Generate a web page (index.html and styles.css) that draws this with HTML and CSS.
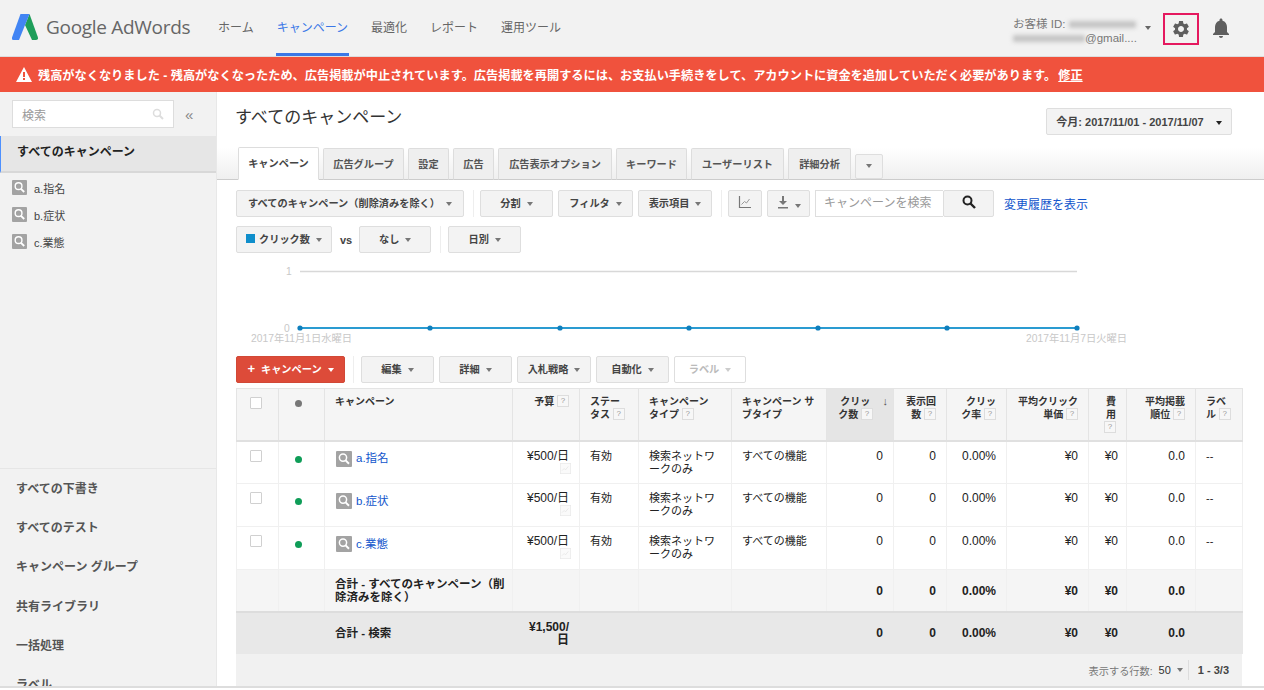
FILE: index.html
```html
<!DOCTYPE html>
<html lang="ja">
<head>
    <meta charset="UTF-8">
    <title>Google AdWords</title>
    <link rel="stylesheet" href="styles.css">
</head>
<body>
    <svg class="sprites" width="0" height="0">
        <symbol id="mag" viewBox="0 0 16 16"><rect width="16" height="16" rx="1" fill="#a3a3a3"/><circle cx="7" cy="6.600" r="3.600" fill="none" stroke="#fff" stroke-width="1.500"/><path d="M9.600 9.400l3.400 3.400" stroke="#fff" stroke-width="2"/></symbol>
        <symbol id="spark" viewBox="0 0 16 16"><rect x=".5" y=".5" width="15" height="15" fill="#fafafa" stroke="#e8e8e8"/><path d="M3 11l3-3 2 2 4-5" fill="none" stroke="#e2e2e2"/></symbol>
    </svg>

    <header class="topbar">
        <div class="logo">
            <svg width="26" height="26" viewBox="0 0 26 26"><path d="M13 11L17.500 0 25.800 23q.8 3-1.800 3H20z" fill="#1e9e5a"/><path d="M8.500 0h9L7 26H1.500Q-.8 26 .2 23z" fill="#4285f4"/></svg>
            <span class="logo-text">Google AdWords</span>
        </div>
        <nav class="menu">
            <a href="#">ホーム</a>
            <a href="#" class="active">キャンペーン</a>
            <a href="#">最適化</a>
            <a href="#">レポート</a>
            <a href="#">運用ツール</a>
        </nav>
        <div class="account">
            <div>お客様 ID: <span class="blur blur-id"></span></div>
            <div><span class="blur blur-mail"></span>@gmail....</div>
        </div>
        <span class="caret caret-account"></span>
        <div class="gear-box">
            <svg width="20" height="20" viewBox="0 0 24 24"><path fill="#5f5f5f" d="M19.14 12.94c.04-.3.06-.61.06-.94 0-.32-.02-.64-.07-.94l2.03-1.58c.18-.14.23-.41.12-.61l-1.92-3.32c-.12-.22-.37-.29-.59-.22l-2.39.96c-.5-.38-1.03-.7-1.62-.94l-.36-2.54c-.04-.24-.24-.41-.48-.41h-3.84c-.24 0-.43.17-.47.41l-.36 2.54c-.59.24-1.13.57-1.62.94l-2.39-.96c-.22-.08-.47 0-.59.22L2.74 8.87c-.12.21-.08.47.12.61l2.03 1.58c-.05.3-.09.63-.09.94s.02.64.07.94l-2.03 1.58c-.18.14-.23.41-.12.61l1.92 3.32c.12.22.37.29.59.22l2.39-.96c.5.38 1.03.7 1.62.94l.36 2.54c.05.24.24.41.48.41h3.84c.24 0 .44-.17.47-.41l.36-2.54c.59-.24 1.13-.56 1.62-.94l2.39.96c.22.08.47 0 .59-.22l1.92-3.32c.12-.22.07-.47-.12-.61l-2.01-1.58zM12 15.6c-1.98 0-3.6-1.62-3.6-3.6s1.62-3.6 3.6-3.6 3.6 1.62 3.6 3.6-1.62 3.6-3.6 3.6z"/></svg>
        </div>
        <svg class="bell" width="24" height="24" viewBox="0 0 24 24"><path fill="#5f5f5f" d="M12 22c1.100 0 2-.9 2-2h-4c0 1.100.89 2 2 2zm6-6v-5c0-3.070-1.640-5.640-4.500-6.320V4c0-.83-.67-1.500-1.500-1.500s-1.500.67-1.500 1.500v.68C7.630 5.360 6 7.920 6 11v5l-2 2v1h16v-1l-2-2z"/></svg>
    </header>

    <div class="alert">
        <svg width="16" height="15" viewBox="0 0 16 15"><path d="M8 0l8 15H0z" fill="#fff"/><path d="M7 5h2v5H7zM7 11h2v2H7z" fill="#f0523d"/></svg>
        <span><b>残高がなくなりました - </b>残高がなくなったため、広告掲載が中止されています。広告掲載を再開するには、お支払い手続きをして、アカウントに資金を追加していただく必要があります。</span>
        <a href="#">修正</a>
    </div>

    <div class="page">
        <aside class="side">
            <div class="side-top">
                <div class="side-search">
                    <div class="side-input">
                        <span>検索</span>
                        <svg width="12" height="12" viewBox="0 0 12 12"><circle cx="5" cy="5" r="3.500" fill="none" stroke="#ddd" stroke-width="1.500"/><path d="M7.500 7.500L11 11" stroke="#ddd" stroke-width="2"/></svg>
                    </div>
                    <span class="collapse">«</span>
                </div>
                <div class="side-current">すべてのキャンペーン</div>
                <div class="side-camp"><svg width="15" height="15"><use href="#mag"/></svg>a.指名</div>
                <div class="side-camp"><svg width="15" height="15"><use href="#mag"/></svg>b.症状</div>
                <div class="side-camp"><svg width="15" height="15"><use href="#mag"/></svg>c.業態</div>
            </div>
            <div class="side-bottom">
                <div class="side-link">すべての下書き</div>
                <div class="side-link">すべてのテスト</div>
                <div class="side-link">キャンペーン グループ</div>
                <div class="side-link">共有ライブラリ</div>
                <div class="side-link">一括処理</div>
                <div class="side-link">ラベル</div>
            </div>
        </aside>

        <main class="main">
            <div class="title-row">
                <h1>すべてのキャンペーン</h1>
                <button class="btn date-btn">今月: 2017/11/01 - 2017/11/07<span class="caret caret-dark"></span></button>
            </div>

            <div class="tabs">
                <a class="tab t81 active" href="#">キャンペーン</a>
                <a class="tab t81" href="#">広告グループ</a>
                <a class="tab t41" href="#">設定</a>
                <a class="tab t41" href="#">広告</a>
                <a class="tab t114" href="#">広告表示オプション</a>
                <a class="tab t71" href="#">キーワード</a>
                <a class="tab t93" href="#">ユーザーリスト</a>
                <a class="tab t63" href="#">詳細分析</a>
                <button class="btn tab-more"><span class="caret"></span></button>
            </div>

            <div class="toolbar">
                <button class="btn w228">すべてのキャンペーン（削除済みを除く）<span class="caret"></span></button>
                <span class="sep"></span>
                <button class="btn w73">分割<span class="caret"></span></button>
                <button class="btn w75">フィルタ<span class="caret"></span></button>
                <button class="btn w74">表示項目<span class="caret"></span></button>
                <span class="sep"></span>
                <button class="btn w34"><svg width="14" height="14" viewBox="0 0 14 14"><path d="M1.500 1v11.500H13" fill="none" stroke="#777" stroke-width="1.200"/><path d="M3.500 9.500l3-3 2 1.500 3-4" fill="none" stroke="#999"/></svg></button>
                <button class="btn w43"><svg width="12" height="14" viewBox="0 0 12 14"><path d="M5 1h2v5h3L6 10 2 6h3zM1 12h10v1.500H1z" fill="#777"/></svg><span class="caret"></span></button>
                <div class="camp-search">
                    <span class="camp-input">キャンペーンを検索</span>
                    <button class="btn camp-go"><svg width="14" height="14" viewBox="0 0 14 14"><circle cx="5.500" cy="5.500" r="4" fill="none" stroke="#222" stroke-width="2"/><path d="M8.500 8.500L13 13" stroke="#222" stroke-width="2.400"/></svg></button>
                </div>
                <a class="history" href="#">変更履歴を表示</a>
            </div>

            <div class="toolbar row-two">
                <button class="btn w96"><span class="swatch"></span>クリック数<span class="caret"></span></button>
                <span class="vs">vs</span>
                <button class="btn w72">なし<span class="caret"></span></button>
                <span class="sep"></span>
                <button class="btn w73">日別<span class="caret"></span></button>
            </div>

            <svg class="chart" width="1006" height="95" viewBox="0 0 1006 95">
                <path d="M64 15.500H841" stroke="#d8d8d8" stroke-width="1.500"/>
                <path d="M64 72H841" stroke="#2a9bd1" stroke-width="2"/>
                <g fill="#0f7fbd">
                    <circle cx="64" cy="72" r="2.600"/><circle cx="194" cy="72" r="2.600"/><circle cx="324" cy="72" r="2.600"/><circle cx="453" cy="72" r="2.600"/><circle cx="582" cy="72" r="2.600"/><circle cx="711" cy="72" r="2.600"/><circle cx="841" cy="72" r="2.600"/>
                </g>
                <g class="chart-label">
                    <text x="50" y="19">1</text>
                    <text x="48" y="76">0</text>
                    <text x="15" y="86">2017年11月1日水曜日</text>
                    <text x="790" y="86">2017年11月7日火曜日</text>
                </g>
            </svg>

            <div class="toolbar actions">
                <button class="btn btn-red"><b class="plus">+</b>キャンペーン<span class="caret caret-white"></span></button>
                <span class="sep"></span>
                <button class="btn w73">編集<span class="caret"></span></button>
                <button class="btn w73">詳細<span class="caret"></span></button>
                <button class="btn w74">入札戦略<span class="caret"></span></button>
                <button class="btn w73">自動化<span class="caret"></span></button>
                <button class="btn w72 disabled">ラベル<span class="caret"></span></button>
            </div>

            <table class="grid">
                <colgroup>
                    <col class="c-check"><col class="c-dot"><col class="c-name"><col class="c-budget"><col class="c-status"><col class="c-type"><col class="c-sub"><col class="c-click"><col class="c-imp"><col class="c-ctr"><col class="c-cpc"><col class="c-cost"><col class="c-pos"><col class="c-label">
                </colgroup>
                <thead>
                    <tr>
                        <th><span class="check"></span></th>
                        <th><span class="dot dot-head"></span></th>
                        <th>キャンペーン</th>
                        <th class="num">予算 <i class="q">?</i></th>
                        <th>ステー<br>タス <i class="q">?</i></th>
                        <th>キャンペーン<br>タイプ <i class="q">?</i></th>
                        <th>キャンペーン サ<br>ブタイプ</th>
                        <th class="num sorted"><span class="sort">↓</span>クリッ&nbsp;<br>ク数 <i class="q">?</i></th>
                        <th class="num">表示回<br>数 <i class="q">?</i></th>
                        <th class="num">クリッ<br>ク率 <i class="q">?</i></th>
                        <th class="num">平均クリック<br>単価 <i class="q">?</i></th>
                        <th class="num">費<br>用<br><i class="q">?</i></th>
                        <th class="num">平均掲載<br>順位 <i class="q">?</i></th>
                        <th>ラベ<br>ル <i class="q">?</i></th>
                    </tr>
                </thead>
                <tbody>
                    <tr>
                        <td><span class="check"></span></td>
                        <td><span class="dot"></span></td>
                        <td><a class="camp" href="#"><svg width="16" height="16"><use href="#mag"/></svg>a.指名</a></td>
                        <td class="num">¥500/日<svg class="spark" width="11" height="11"><use href="#spark"/></svg></td>
                        <td>有効</td><td>検索ネットワークのみ</td><td>すべての機能</td>
                        <td class="num">0</td><td class="num">0</td><td class="num">0.00%</td><td class="num">¥0</td><td class="num">¥0</td><td class="num">0.0</td><td>--</td>
                    </tr>
                    <tr>
                        <td><span class="check"></span></td>
                        <td><span class="dot"></span></td>
                        <td><a class="camp" href="#"><svg width="16" height="16"><use href="#mag"/></svg>b.症状</a></td>
                        <td class="num">¥500/日<svg class="spark" width="11" height="11"><use href="#spark"/></svg></td>
                        <td>有効</td><td>検索ネットワークのみ</td><td>すべての機能</td>
                        <td class="num">0</td><td class="num">0</td><td class="num">0.00%</td><td class="num">¥0</td><td class="num">¥0</td><td class="num">0.0</td><td>--</td>
                    </tr>
                    <tr>
                        <td><span class="check"></span></td>
                        <td><span class="dot"></span></td>
                        <td><a class="camp" href="#"><svg width="16" height="16"><use href="#mag"/></svg>c.業態</a></td>
                        <td class="num">¥500/日<svg class="spark" width="11" height="11"><use href="#spark"/></svg></td>
                        <td>有効</td><td>検索ネットワークのみ</td><td>すべての機能</td>
                        <td class="num">0</td><td class="num">0</td><td class="num">0.00%</td><td class="num">¥0</td><td class="num">¥0</td><td class="num">0.0</td><td>--</td>
                    </tr>
                    <tr class="total">
                        <td></td><td></td>
                        <td>合計 - すべてのキャンペーン（削除済みを除く）</td>
                        <td></td><td></td><td></td><td></td>
                        <td class="num">0</td><td class="num">0</td><td class="num">0.00%</td><td class="num">¥0</td><td class="num">¥0</td><td class="num">0.0</td><td></td>
                    </tr>
                    <tr class="total total-all">
                        <td></td><td></td>
                        <td>合計 - 検索</td>
                        <td class="num">¥1,500/日</td>
                        <td></td><td></td><td></td>
                        <td class="num">0</td><td class="num">0</td><td class="num">0.00%</td><td class="num">¥0</td><td class="num">¥0</td><td class="num">0.0</td><td></td>
                    </tr>
                </tbody>
            </table>
            <div class="pager">
                <span class="pager-label">表示する行数:</span>
                <span class="pager-size">50</span>
                <span class="caret"></span>
                <span class="pager-range">1 - 3/3</span>
            </div>
        </main>
    </div>
</body>
</html>
```

FILE: styles.css
```css
* {
    box-sizing: border-box;
}
html, body {
    height: 690px;
}
body {
    margin: 0;
    overflow: hidden;
    background: #fff;
    color: #333;
    font-family: "Liberation Sans", "Noto Sans CJK JP", sans-serif;
    font-size: 11px;
}
a {
    text-decoration: none;
}
.sprites {
    position: absolute;
}
.caret {
    display: inline-block;
    width: 0;
    height: 0;
    margin-left: 6px;
    vertical-align: middle;
    border-left: 3.500px solid transparent;
    border-right: 3.500px solid transparent;
    border-top: 4px solid #777;
}

/* top bar */
.topbar {
    display: flex;
    align-items: center;
    height: 57px;
    padding-left: 12px;
    background: #f2f2f2;
    border-bottom: 1px solid #ddd;
}
.logo {
    display: flex;
    align-items: center;
    width: 205px;
    margin-top: -3px;
}
.logo-text {
    margin-left: 8px;
    color: #666;
    font-family: "Open Sans", sans-serif;
    font-size: 19px;
    letter-spacing: -.3px;
}
.menu {
    display: flex;
    align-self: stretch;
    gap: 21px;
}
.menu a {
    display: flex;
    align-items: center;
    padding: 0 1px;
    color: #666;
    font-size: 12px;
    border-bottom: 3px solid transparent;
}
.menu a.active {
    color: #3b78e7;
    border-bottom-color: #3b78e7;
}
.account {
    margin: 6px 0 0 auto;
    width: 132px;
    color: #777;
    font-size: 11.500px;
    line-height: 14px;
}
.blur {
    display: inline-block;
    height: 7px;
    background: #c4c4c4;
    filter: blur(2px);
}
.blur-id {
    width: 67px;
}
.blur-mail {
    width: 72px;
}
.caret-account {
    margin-left: 0;
    border-top-color: #666;
}
.gear-box {
    display: flex;
    align-items: center;
    justify-content: center;
    width: 36px;
    height: 32px;
    margin: 2px 0 0 12px;
    border: 2px solid #e5195f;
}
.bell {
    margin: 0 31px 0 10px;
}

/* red alert */
.alert {
    display: flex;
    align-items: center;
    height: 35px;
    padding-left: 16px;
    color: #fff;
    font-size: 12.200px;
    font-weight: 700;
    background: #f0523d;
}
.alert svg {
    margin-right: 6px;
}
.alert b {
    font-weight: 700;
}
.alert a {
    margin-left: 2px;
    color: #fff;
    text-decoration: underline;
}

/* left column */
.page {
    display: flex;
    height: 596px;
    border-bottom: 2px solid #ddd;
}
.side {
    flex: none;
    width: 217px;
    overflow: hidden;
    background: #f2f2f2;
    border-right: 1px solid #e8e8e8;
}
.side-top {
    height: 376px;
}
.side-search {
    display: flex;
    align-items: center;
    padding: 8px 0 8px 12px;
}
.side-input {
    display: flex;
    align-items: center;
    justify-content: space-between;
    width: 162px;
    height: 28px;
    padding: 0 9px;
    color: #999;
    font-size: 12px;
    background: #fff;
    border: 1px solid #ddd;
}
.collapse {
    margin-left: 11px;
    color: #888;
    font-size: 15px;
}
.side-current {
    height: 37px;
    padding-left: 16px;
    margin-bottom: 1px;
    color: #222;
    font-size: 12px;
    font-weight: 700;
    line-height: 33px;
    background: #e6e6e6;
    border-left: 1px solid #4d90fe;
    border-bottom: 2px solid #d8d8d8;
}
.side-camp {
    display: flex;
    align-items: center;
    height: 27px;
    padding-left: 12px;
    color: #444;
}
.side-camp svg {
    margin-right: 7px;
}
.side-bottom {
    padding-top: 1px;
    border-top: 1px solid #e6e6e6;
}
.side-link {
    height: 39.200px;
    padding-left: 16px;
    color: #555;
    font-size: 12px;
    font-weight: 700;
    line-height: 39px;
}

/* main column */
.main {
    flex: 1;
    min-width: 0;
    padding-top: 16px;
}
.title-row {
    display: flex;
    align-items: flex-start;
    justify-content: space-between;
    height: 27px;
    padding: 0 32px 0 19px;
}
h1 {
    margin: 0 0 0 -1px;
    color: #333;
    font-size: 17px;
    font-weight: 400;
    line-height: 20px;
}
.btn {
    flex: none;
    height: 27px;
    padding: 0 0 2px;
    color: #444;
    font-family: inherit;
    font-size: 10.200px;
    font-weight: 700;
    background: #f3f3f3;
    border: 1px solid #dedede;
    border-radius: 2px;
}
.date-btn {
    width: 186px;
    font-size: 11px;
}
.caret-dark {
    margin-left: 12px;
    border-top-color: #222;
}
.tabs {
    display: flex;
    align-items: flex-end;
    gap: 4px;
    height: 33px;
    margin-top: 12px;
    padding-left: 21px;
    background: linear-gradient(#fff, #efefef);
    border-bottom: 1px solid #ccc;
}
.tab {
    height: 32px;
    margin-bottom: -1px;
    color: #555;
    font-size: 10.200px;
    font-weight: 700;
    line-height: 31px;
    text-align: center;
    background: #efefef;
    border: 1px solid #ddd;
    border-bottom: 1px solid #ccc;
    border-radius: 2px 2px 0 0;
}
.tab.active {
    height: 33px;
    color: #444;
    background: #fff;
    border-bottom-color: #fff;
}
.t41 { width: 41px; }
.t63 { width: 63px; }
.t71 { width: 71px; }
.t81 { width: 81px; }
.t93 { width: 93px; }
.t114 { width: 114px; }
.tab-more {
    width: 28px;
    height: 25px;
    margin-bottom: 0;
}
.tab-more .caret {
    margin-left: 0;
}
.toolbar {
    display: flex;
    align-items: center;
    gap: 5px;
    height: 27px;
    margin-top: 10px;
    padding-left: 19px;
}
.row-two {
    margin-top: 9px;
}
.sep {
    width: 1px;
    height: 27px;
    margin: 0 1px 0 4px;
    background: #eee;
}
.row-two .sep {
    margin-right: 2px;
}
.actions .sep {
    margin: 0 2px 0 3px;
}
.w228 { width: 228px; }
.w72 { width: 72px; }
.w73 { width: 73px; }
.w74 { width: 74px; }
.w75 { width: 75px; }
.w34 { width: 34px; }
.w43 { width: 43px; }
.w96 { width: 96px; }
.camp-search {
    display: flex;
}
.camp-input {
    width: 128px;
    height: 27px;
    padding-left: 8px;
    color: #999;
    font-size: 12px;
    line-height: 25px;
    background: #fff;
    border: 1px solid #dedede;
    border-right: none;
}
.camp-go {
    width: 51px;
}
.history {
    margin-left: 5px;
    color: #1155cc;
    font-size: 12px;
}
.swatch {
    display: inline-block;
    width: 9px;
    height: 9px;
    margin-right: 4px;
    background: #0f8ecb;
}
.vs {
    margin: 0 2px 0 3px;
    color: #444;
    font-weight: 700;
}
.chart {
    display: block;
    margin: 3px 0 0 19px;
}
.chart-label text {
    fill: #c8c8c8;
    font-size: 10.300px;
}
.actions {
    margin-top: 5px;
}
.btn-red {
    width: 109px;
    color: #fff;
    background: #dd4b39;
    border-color: #d14836;
}
.plus {
    margin-right: 6px;
    font-size: 13px;
}
.caret-white {
    border-top-color: #fff;
}
.disabled {
    color: #bbb;
    background: #fff;
}
.disabled .caret {
    border-top-color: #ccc;
}

/* table */
.grid {
    width: 1006px;
    margin: 5px 0 0 19px;
    table-layout: fixed;
    border-collapse: collapse;
    border: 1px solid #eee;
}
.c-check { width: 42px; }
.c-dot { width: 46px; }
.c-name { width: 188px; }
.c-budget { width: 67px; }
.c-status { width: 59px; }
.c-type { width: 93px; }
.c-sub { width: 95px; }
.c-click { width: 67px; }
.c-imp { width: 53px; }
.c-ctr { width: 60px; }
.c-cpc { width: 82px; }
.c-cost { width: 38px; }
.c-pos { width: 69px; }
.c-label { width: 47px; }
.grid th, .grid td {
    padding: 8px 7px 0 10px;
    vertical-align: top;
    text-align: left;
    line-height: 13px;
    border: 1px solid #f0f0f0;
}
.grid th {
    height: 52px;
    padding-top: 6px;
    padding-right: 5px;
    color: #333;
    font-size: 10px;
    background: #f5f5f5;
    border-color: #e4e4e4;
    border-bottom: 2px solid #e0e0e0;
}
.grid td {
    height: 43px;
    color: #222;
}
.grid .num {
    padding-right: 10px;
    text-align: right;
}
.grid td.num {
    font-size: 12px;
}
.grid td:nth-child(12) {
    padding-right: 8px;
}
.grid th.num {
    padding-left: 5px;
}
.grid th.sorted {
    padding-right: 20px;
    background: #e5e5e5;
}
.sort {
    float: right;
    margin-right: -15px;
    color: #555;
    font-size: 11px;
}
.q {
    display: inline-block;
    width: 12px;
    height: 12px;
    color: #999;
    font-size: 8px;
    font-style: normal;
    font-weight: 400;
    line-height: 10px;
    text-align: center;
    vertical-align: top;
    background: #f7f7f7;
    border: 1px solid #ddd;
}
.check {
    display: block;
    width: 12px;
    height: 12px;
    margin: 0 0 0 3px;
    background: #fff;
    border: 1px solid #d0d0d0;
    border-radius: 1px;
}
.grid th .check {
    margin-top: 2px;
}
.dot {
    display: block;
    width: 7px;
    height: 7px;
    margin: 6px 0 0 6px;
    background: #0f9d58;
    border-radius: 50%;
}
.dot-head {
    margin-top: 5px;
    background: #777;
}
.camp {
    display: flex;
    align-items: center;
    gap: 4px;
    margin: 1px 0 0 1px;
    color: #1155cc;
    font-size: 11.500px;
}
.spark {
    display: block;
    margin: 0 -2px 0 auto;
}
.total td {
    height: 42px;
    padding-top: 2px;
    font-size: 11.500px;
    font-weight: 700;
    vertical-align: middle;
    background: #f5f5f5;
}
.total-all td {
    background: #e8e8e8;
    border-color: #e8e8e8;
    border-top: 2px solid #ddd;
}
.pager {
    display: flex;
    align-items: center;
    justify-content: flex-end;
    width: 1006px;
    height: 32px;
    margin-left: 19px;
    padding-right: 13px;
    background: #f1f1f1;
}
.pager-label {
    color: #777;
    font-size: 10.200px;
}
.pager-size {
    margin-left: 6px;
    color: #333;
}
.pager-range {
    margin-left: 5px;
    padding-left: 9px;
    color: #444;
    font-weight: 700;
    line-height: 20px;
    border-left: 1px solid #ddd;
}
```
